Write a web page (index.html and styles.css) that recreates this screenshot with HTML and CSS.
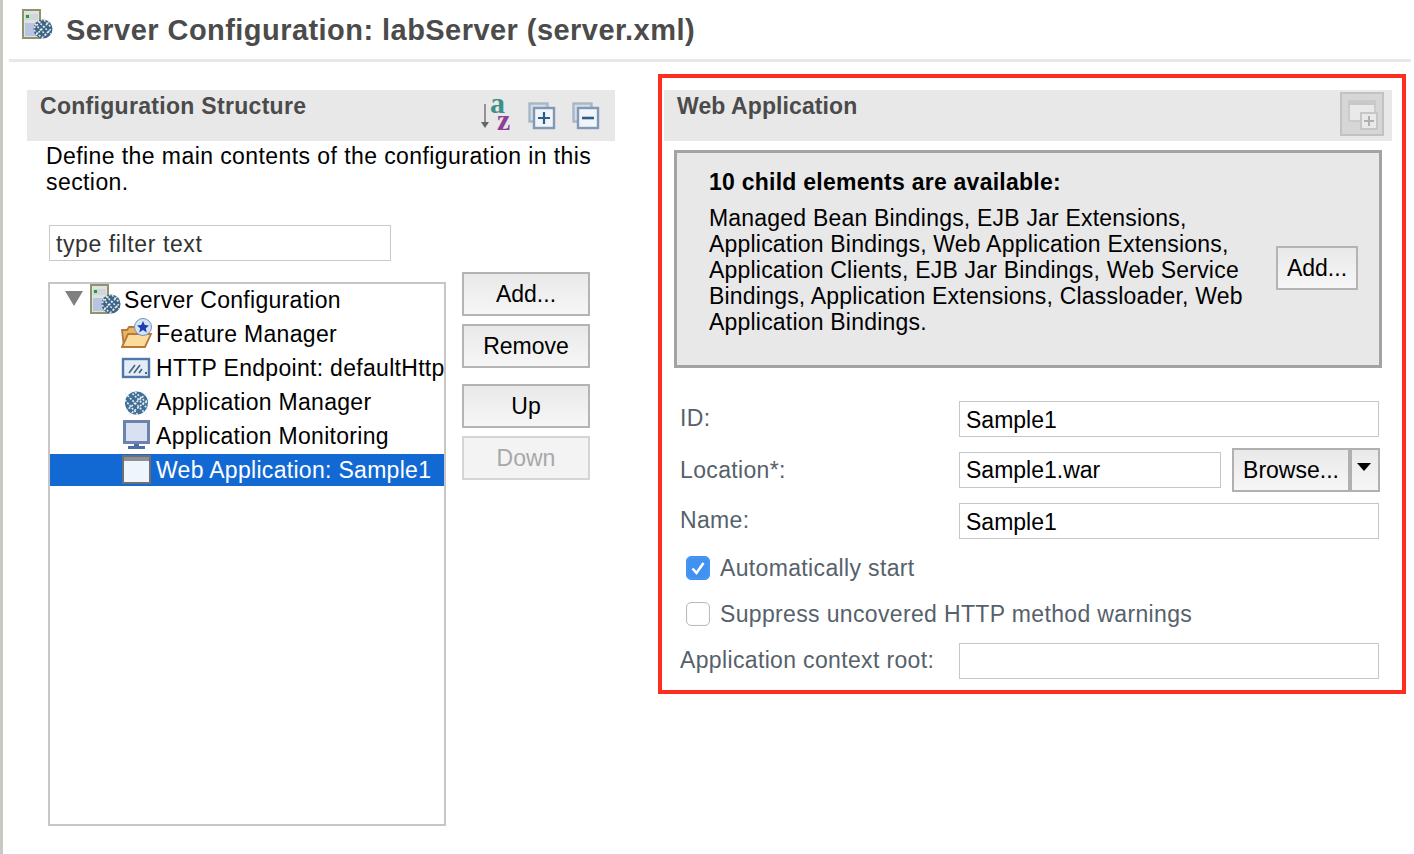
FILE: index.html
```html
<!DOCTYPE html>
<html lang="en">
<head>
<meta charset="utf-8">
<title>Server Configuration</title>
<link rel="stylesheet" href="styles.css">
</head>
<body>
<div class="page">
  <header class="title-bar">
    <svg class="title-icon" width="32" height="32" viewBox="0 0 32 32">
      <rect x="1" y="1" width="17" height="28" fill="#dfe3dc" stroke="#8f9470" stroke-width="2"/>
      <rect x="3" y="5" width="13" height="6" fill="#cfd6dc"/><rect x="4" y="6" width="3" height="3" fill="#1f9a3c"/>
      <rect x="3" y="14" width="13" height="13" fill="#b9c4e0"/>
      <circle cx="21" cy="20" r="9.5" fill="#3d6586"/>
      <path d="M13 15l12 12M16 12l13 13M12 21l7 7M22 11l7 7M14 26l13-13M12 19l8-8M20 29l9-9" stroke="#e8eef2" stroke-width="1.5" stroke-dasharray="2 1.5"/>
    </svg>
    <h1 class="title">Server Configuration: labServer (server.xml)</h1>
  </header>
  <main class="columns">
    <section class="left">
      <div class="sec-head left-head">
        <h2 class="sec-title">Configuration Structure</h2>
        <div class="tools">
          <svg class="sort-icon" width="32" height="34" viewBox="0 0 32 34">
            <path d="M5 6v20" stroke="#777" stroke-width="1.5"/><path d="M1 24h8l-4 6z" fill="#666"/>
            <text x="10" y="15" class="az az-a">a</text><text x="17" y="32" class="az az-z">z</text>
          </svg>
          <svg width="28" height="28" viewBox="0 0 28 28">
            <rect x="1.5" y="1.5" width="18" height="18" fill="#d5dde8" stroke="#a9b6c8" stroke-width="2.4"/>
            <rect x="6" y="6" width="20" height="20" fill="#f1f4f8" stroke="#8199b6" stroke-width="2.4"/>
            <path d="M16 10v12M10 16h12" stroke="#2b5e8c" stroke-width="2.2"/>
          </svg>
          <svg width="28" height="28" viewBox="0 0 28 28">
            <rect x="1.5" y="1.5" width="18" height="18" fill="#d5dde8" stroke="#a9b6c8" stroke-width="2.4"/>
            <rect x="6" y="6" width="20" height="20" fill="#f1f4f8" stroke="#8199b6" stroke-width="2.4"/>
            <path d="M10 16h12" stroke="#2b5e8c" stroke-width="2.6"/>
          </svg>
        </div>
      </div>
      <p class="desc">Define the main contents of the configuration in this section.</p>
      <div class="filter">type filter text</div>
      <div class="tree-area">
        <div class="tree">
          <div class="node root">
            <span class="twisty"></span>
            <svg class="ticon" width="32" height="32" viewBox="0 0 32 32">
              <rect x="1" y="1" width="17" height="28" fill="#dfe3dc" stroke="#8f9470" stroke-width="2"/>
              <rect x="3" y="5" width="13" height="6" fill="#cfd6dc"/><rect x="4" y="6" width="3" height="3" fill="#1f9a3c"/>
              <rect x="3" y="14" width="13" height="13" fill="#b9c4e0"/>
              <circle cx="21" cy="20" r="9.5" fill="#3d6586"/>
              <path d="M13 15l12 12M16 12l13 13M12 21l7 7M22 11l7 7M14 26l13-13M12 19l8-8M20 29l9-9" stroke="#e8eef2" stroke-width="1.5" stroke-dasharray="2 1.5"/>
            </svg>
            <span>Server Configuration</span>
          </div>
          <div class="node">
            <svg class="ticon" width="32" height="32" viewBox="0 0 32 32">
              <path d="M1 12h5l2-3h10v20H3z" fill="#e9b468" stroke="#b6793a" stroke-width="1.8"/>
              <path d="M1 29l6-13h23l-6 13z" fill="#fbdc9b" stroke="#b6793a" stroke-width="1.8"/>
              <circle cx="22" cy="9" r="8.5" fill="#d6e4f4" stroke="#6f93c3"/>
              <path d="M22 3l1.8 4 4.2.4-3.2 2.8 1 4.2-3.8-2.3-3.8 2.3 1-4.2-3.2-2.8 4.2-.4z" fill="#1f3fb0"/>
            </svg>
            <span>Feature Manager</span>
          </div>
          <div class="node">
            <svg class="ticon" width="32" height="32" viewBox="0 0 32 32">
              <rect x="2" y="7" width="26" height="18" fill="#e3ecf7" stroke="#4f77a8" stroke-width="2.4"/>
              <path d="M8 21l6-8M13 21l6-8M18 21l3-4" stroke="#45627f" stroke-width="1.6"/><rect x="24" y="20" width="2" height="2" fill="#45627f"/>
            </svg>
            <span>HTTP Endpoint: defaultHttpEndpoint</span>
          </div>
          <div class="node">
            <svg class="ticon" width="32" height="32" viewBox="0 0 32 32">
              <circle cx="15.5" cy="17" r="11.5" fill="#3f6f96"/>
              <path d="M4 7l22 22M9 5l20 20M4 14l13 15M14 6l15 14M5 25L26 7M8 29L29 12" stroke="#e8eef2" stroke-width="1.6" stroke-dasharray="2 1.5"/>
            </svg>
            <span>Application Manager</span>
          </div>
          <div class="node">
            <svg class="ticon" width="32" height="32" viewBox="0 0 32 32">
              <rect x="3.5" y="1.5" width="24" height="21" fill="#d8e0f2" stroke="#6d82ad" stroke-width="3"/>
              <path d="M13 24h5v2h-5zM7 26h17v3H7z" fill="#4f6ea6"/>
            </svg>
            <span>Application Monitoring</span>
          </div>
          <div class="node selected">
            <svg class="ticon" width="32" height="32" viewBox="0 0 32 32">
              <rect x="2" y="2" width="27" height="27" fill="#eef5fc" stroke="#6f6f6f" stroke-width="2"/>
              <rect x="3" y="3" width="25" height="4" fill="#8a9096"/>
            </svg>
            <span>Web Application: Sample1</span>
          </div>
        </div>
        <div class="tree-buttons">
          <button class="btn">Add...</button>
          <button class="btn">Remove</button>
          <button class="btn gap-top">Up</button>
          <button class="btn disabled">Down</button>
        </div>
      </div>
    </section>
    <section class="right">
      <div class="sec-head right-head">
        <h2 class="sec-title">Web Application</h2>
        <div class="detail-tool">
          <svg width="32" height="32" viewBox="0 0 32 32">
            <rect x="3" y="3" width="26" height="20" fill="#e9e9e9" stroke="#cbcbcb" stroke-width="2"/>
            <rect x="3" y="3" width="26" height="4" fill="#c8c8c8"/>
            <rect x="15" y="15" width="16" height="16" fill="#e9e9e9" stroke="#c6c6c6" stroke-width="2"/>
            <path d="M23 18v10M18 23h10" stroke="#b0b0b0" stroke-width="2"/>
          </svg>
        </div>
      </div>
      <div class="child-box">
        <div class="child-text">
          <h3 class="child-title">10 child elements are available:</h3>
          <p class="child-list">Managed Bean Bindings, EJB Jar Extensions, Application Bindings, Web Application Extensions, Application Clients, EJB Jar Bindings, Web Service Bindings, Application Extensions, Classloader, Web Application Bindings.</p>
        </div>
        <button class="btn add-child">Add...</button>
      </div>
      <div class="form">
        <div class="row row-id"><label class="lbl">ID:</label><div class="field">Sample1</div></div>
        <div class="row row-loc">
          <label class="lbl">Location*:</label>
          <div class="loc-controls">
            <div class="field loc-field">Sample1.war</div>
            <div class="split">
              <span class="split-main">Browse...</span>
              <span class="split-arrow"></span>
            </div>
          </div>
        </div>
        <div class="row row-name"><label class="lbl">Name:</label><div class="field">Sample1</div></div>
        <div class="check-row check-first">
          <span class="check on"><svg width="24" height="24" viewBox="0 0 24 24"><path d="M6.5 12.5l4 4.5 7-10" fill="none" stroke="#fff" stroke-width="2.6"/></svg></span>
          <span class="lbl">Automatically start</span>
        </div>
        <div class="check-row check-second">
          <span class="check"></span>
          <span class="lbl">Suppress uncovered HTTP method warnings</span>
        </div>
        <div class="row row-ctx"><label class="lbl">Application context root:</label><div class="field"></div></div>
      </div>
    </section>
  </main>
</div>
</body>
</html>
```

FILE: styles.css
```css
* { box-sizing: border-box; }
html, body { margin: 0; padding: 0; }
body {
  width: 1414px;
  height: 854px;
  overflow: hidden;
  background: #fff;
  color: #000;
  font-family: "Liberation Sans", Arial, sans-serif;
  font-size: 23px;
  border-left: 3px solid #c9c9c4;
}
.page { display: flex; flex-direction: column; height: 100%; }
.title-bar {
  margin-left: 6px;
  width: 1402px;
  height: 62px;
  border-bottom: 3px solid #e8e8e8;
  display: flex;
  align-items: flex-start;
  padding: 9px 0 0 13px;
  gap: 12px;
}
.title-icon { flex: none; }
.title {
  margin: 3px 0 0;
  font-size: 29px;
  line-height: 36px;
  font-weight: bold;
  color: #4b4b4b;
  white-space: nowrap;
  letter-spacing: 0.45px;
}
.columns { display: flex; padding: 12px 0 0 24px; align-items: flex-start; }
.left { width: 588px; padding-top: 16px; margin-right: 43px; }
.sec-head {
  height: 51px;
  background: #e8e8e8;
  display: flex;
  justify-content: space-between;
  align-items: flex-start;
}
.left-head { padding-left: 13px; }
.sec-title {
  margin: 0;
  padding-top: 2px;
  font-size: 23px;
  line-height: 28px;
  font-weight: bold;
  color: #4b4b4b;
  letter-spacing: 0.3px;
}
.tools { display: flex; align-items: flex-start; gap: 16px; padding: 8px 15px 0 0; }
.tools svg { margin-top: 4px; }
.tools .sort-icon { margin-top: 0; overflow: visible; }
.az { font-family: "Liberation Serif", serif; font-size: 30px; font-weight: bold; }
.az-a { fill: #3d9189; }
.az-z { fill: #8f3f97; }
.desc { margin: 2px 0 0 19px; width: 560px; font-size: 23px; line-height: 26px; letter-spacing: 0.42px; }
.filter {
  margin: 30px 0 0 22px;
  width: 342px;
  height: 36px;
  border: 1px solid #c9c9c9;
  padding-left: 6px;
  line-height: 36px;
  color: #333;
  letter-spacing: 0.6px;
}
.tree-area { display: flex; align-items: flex-start; margin: 11px 0 0 21px; }
.tree {
  width: 398px;
  height: 544px;
  margin-top: 10px;
  border: 2px solid #c6c6c6;
  overflow: hidden;
}
.node {
  display: flex;
  align-items: center;
  height: 32px;
  margin-bottom: 2px;
  padding-left: 71px;
  gap: 3px;
  white-space: nowrap;
  letter-spacing: 0.3px;
}
.node.root { padding-left: 15px; gap: 2px; }
.node .ticon { flex: none; }
.twisty {
  width: 0; height: 0;
  border-left: 9px solid transparent;
  border-right: 9px solid transparent;
  border-top: 15px solid #808080;
  margin: -4px 5px 0 0;
}
.node.selected { background: #1369d3; color: #fff; }
.tree-buttons { display: flex; flex-direction: column; gap: 8px; margin-left: 16px; }
.btn {
  font: inherit;
  width: 128px;
  height: 44px;
  border: 2px solid #b4b4b4;
  border-radius: 0;
  background: linear-gradient(#e9e9e9, #f6f6f6);
  color: #000;
  padding: 0;
}
.gap-top { margin-top: 8px; }
.btn.disabled { color: #a8a8a8; border-color: #d5d5d5; background: #f3f3f3; }
.right {
  width: 748px;
  height: 620px;
  border: 4px solid #ff2d20;
  padding: 12px 0 0 2px;
}
.right-head { width: 728px; padding-left: 13px; }
.right-head .sec-title { letter-spacing: 0.1px; }
.detail-tool {
  width: 44px;
  height: 44px;
  margin: 2px 8px 0 0;
  background: #d6d6d6;
  border: 2px solid #c2c2c2;
  display: flex;
  align-items: center;
  justify-content: center;
}
.child-box {
  margin: 9px 0 0 10px;
  width: 708px;
  height: 218px;
  border: 3px solid #a3a3a3;
  background: #e8e8e8;
  padding: 14px 21px 0 32px;
  display: flex;
  align-items: flex-start;
  justify-content: space-between;
}
.child-text { width: 540px; }
.child-title { margin: 0; font-size: 23px; line-height: 30px; font-weight: bold; letter-spacing: 0.25px; }
.child-list { margin: 8px 0 0; font-size: 23px; line-height: 26px; letter-spacing: 0.2px; }
.add-child { width: 82px; height: 44px; margin-top: 79px; }
.form { margin-left: 16px; width: 700px; }
.lbl { color: #56616b; white-space: nowrap; letter-spacing: 0.35px; }
.row { display: grid; grid-template-columns: 279px 420px; align-items: center; }
.row .lbl { padding-bottom: 2px; }
.row-id { margin-top: 33px; }
.row-loc { margin-top: 11px; height: 44px; }
.row-loc .lbl { padding-bottom: 0; }
.row-name { margin-top: 11px; }
.row-ctx { margin-top: 17px; }
.field {
  height: 36px;
  border: 1px solid #c6c6c6;
  padding-left: 6px;
  line-height: 36px;
  background: #fff;
}
.loc-controls { display: flex; align-items: center; width: 421px; }
.loc-field { width: 262px; margin-right: 11px; line-height: 34px; margin-top: -1px; }
.split {
  display: flex;
  width: 148px;
  height: 44px;
  border: 2px solid #b0b0b0;
  background: linear-gradient(#e9e9e9, #f6f6f6);
}
.split-main {
  width: 118px;
  border-right: 4px solid #b0b0b0;
  line-height: 40px;
  text-align: center;
}
.split-arrow { flex: 1; position: relative; }
.split-arrow::after {
  content: "";
  position: absolute;
  left: 5px;
  top: 13px;
  border-left: 7px solid transparent;
  border-right: 7px solid transparent;
  border-top: 8px solid #000;
}
.check-row { display: flex; align-items: center; gap: 10px; height: 24px; padding-left: 6px; }
.check-first { margin-top: 17px; }
.check-second { margin-top: 22px; }
.check {
  width: 24px;
  height: 24px;
  border-radius: 5px;
  border: 1px solid #bcbcbc;
  box-shadow: inset 0 0 1px #ccc;
  background: #fff;
  display: flex;
}
.check.on { background: #3f92f2; border-color: #3f92f2; }
.check.on svg { margin: -1px; }
```
